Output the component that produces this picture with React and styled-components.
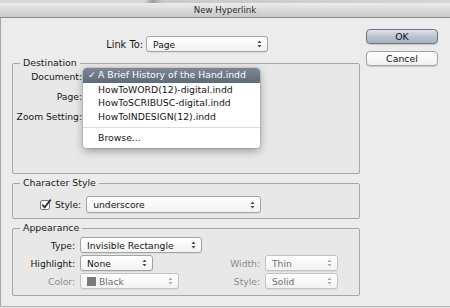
import React from "react";
import styled, { createGlobalStyle } from "styled-components";

const GlobalStyle = createGlobalStyle`
  html, body { margin: 0; padding: 0; }
  body {
    width: 450px; height: 308px; overflow: hidden;
    background: #ececec;
    font-family: "DejaVu Sans", "Liberation Sans", sans-serif;
    font-size: 9.2px;
    color: #161616;
  }
  * { box-sizing: border-box; }
`;

const Window = styled.div`
  width: 450px;
  height: 308px;
  display: flex;
  flex-direction: column;
  background: #ececec;
`;

const TopStrip = styled.div`
  height: 3px;
  background: linear-gradient(90deg, #d8d8d8 0%, #d8d8d8 32%, #9c9c9c 34%, #c9c9c9 36%, #d4d4d4 100%);
`;

const TitleBar = styled.div`
  height: 15px;
  background: linear-gradient(#ececec, #c8c8c8);
  border-bottom: 1px solid #8d8d8d;
  text-align: center;
  font-size: 8.6px;
  line-height: 14px;
  color: #2b2b2b;
`;

const Body = styled.div`
  flex: 1;
  display: grid;
  grid-template-columns: 348px 72px;
  column-gap: 6px;
  padding-left: 11px;
  border-left: 1px solid #a6a6a6;
  align-items: start;
`;

const Footer = styled.div`
  height: 2px;
  border-top: 1px solid #b4b4b4;
  background: #e2e2e2;
`;

const Main = styled.div`
  padding-top: 18px;
  display: flex;
  flex-direction: column;
`;

const Side = styled.div`
  padding-top: 11px;
  display: flex;
  flex-direction: column;
  gap: 7px;
`;

const Button = styled.div`
  height: 15px;
  border-radius: 4px;
  text-align: center;
  line-height: 13px;
  font-size: 9.4px;
  color: #111;
  border: 1px solid ${(p) => (p.$default ? "#6d7583" : "#a2a2a2")};
  background: ${(p) =>
    p.$default
      ? "linear-gradient(#dde2ea, #b9c1cd 55%, #aab3c1)"
      : "linear-gradient(#ffffff, #f1f1f1)"};
  box-shadow: 0 1px 1px rgba(0, 0, 0, 0.15);
`;

const LinkRow = styled.div`
  display: flex;
  align-items: center;
  height: 16px;
`;

const LinkLabel = styled.span`
  width: 131px;
  text-align: right;
  margin-right: 3px;
  font-size: 9.8px;
`;

const SelectBox = styled.div`
  position: relative;
  width: ${(p) => p.$w}px;
  height: ${(p) => p.$h || 16}px;
  border: 1px solid ${(p) => (p.$disabled ? "#c3c3c3" : "#a3a3a3")};
  border-radius: 3px;
  background: linear-gradient(#ffffff, #f2f2f2);
  box-shadow: 0 1px 0 rgba(0, 0, 0, 0.06);
  display: flex;
  align-items: center;
  padding-left: 6px;
  color: ${(p) => (p.$disabled ? "#6f6f6f" : "#141414")};
  justify-self: start;
`;

const Swatch = styled.span`
  width: 9px;
  height: 9px;
  background: #7a7a7a;
  margin-right: 3px;
`;

const ArrowIcon = styled.svg`
  position: absolute;
  right: 5px;
  top: 50%;
  margin-top: -4px;
`;

function Arrows({ disabled }) {
  const c = disabled ? "#a8a8a8" : "#4a4a4a";
  return (
    <ArrowIcon width="5" height="8" viewBox="0 0 5 8">
      <path d="M2.5 0.5 L4.5 3 L0.5 3 Z" fill={c} />
      <path d="M2.5 7.5 L4.5 5 L0.5 5 Z" fill={c} />
    </ArrowIcon>
  );
}

function Select({ w, h, disabled, swatch, children }) {
  return (
    <SelectBox $w={w} $h={h} $disabled={disabled}>
      {swatch && <Swatch />}
      {children}
      <Arrows disabled={disabled} />
    </SelectBox>
  );
}

const Group = styled.fieldset`
  position: relative;
  margin: ${(p) => p.$mt}px 0 0 0;
  padding: 0;
  height: ${(p) => p.$h}px;
  border: 1px solid #a7a7a7;
  border-radius: 2px;
  background: rgba(0, 0, 0, 0.015);
  min-width: 0;
`;

const Legend = styled.legend`
  margin-left: 7px;
  padding: 0 3px;
  line-height: 12px;
  font-size: 9.4px;
  color: #1a1a1a;
`;

const DestGrid = styled.div`
  display: grid;
  grid-template-columns: 69px 1fr;
  grid-auto-rows: 14px;
  column-gap: 3px;
  row-gap: 6px;
  align-items: center;
`;

const Label = styled.span`
  text-align: right;
  white-space: nowrap;
  color: ${(p) => (p.$disabled ? "#8b8b8b" : "#161616")};
`;

const Anchor = styled.div`
  position: relative;
  height: 14px;
`;

const Menu = styled.div`
  position: absolute;
  left: -2px;
  top: -1px;
  width: 177px;
  padding-bottom: 3px;
  background: rgba(255, 255, 255, 0.98);
  border-radius: 4px;
  box-shadow: 0 3px 9px rgba(0, 0, 0, 0.35), 0 0 0 1px rgba(0, 0, 0, 0.08);
  z-index: 10;
  overflow: hidden;
`;

const MenuItem = styled.div`
  position: relative;
  height: ${(p) => (p.$selected ? 14.5 : 13.5)}px;
  line-height: ${(p) => (p.$selected ? 14.5 : 13.5)}px;
  padding-left: 15px;
  font-size: 9.3px;
  white-space: nowrap;
  color: ${(p) => (p.$selected ? "#ffffff" : "#161616")};
  background: ${(p) =>
    p.$selected ? "linear-gradient(#7c8797, #5e6979)" : "transparent"};
`;

const Check = styled.span`
  position: absolute;
  left: 5px;
  top: 0;
`;

const Separator = styled.div`
  height: 1px;
  margin: 3.5px 0;
  background: #dcdcdc;
`;

const StyleRow = styled.div`
  display: flex;
  align-items: center;
  height: 17px;
  margin-top: 7px;
  padding-left: 27px;
`;

const CheckBox = styled.svg`
  margin-right: 3px;
`;

const StyleLabel = styled.span`
  margin-right: 5px;
`;

const AppGrid = styled.div`
  display: grid;
  grid-template-columns: 62px 125px 50px 73px;
  grid-auto-rows: 16px;
  column-gap: 5px;
  row-gap: 2px;
  margin-top: 3px;
  align-items: center;
`;

export default function App() {
  return (
    <>
      <GlobalStyle />
      <Window>
        <TopStrip />
        <TitleBar>New Hyperlink</TitleBar>
        <Body>
          <Main>
            <LinkRow>
              <LinkLabel>Link To:</LinkLabel>
              <Select w={122}>Page</Select>
            </LinkRow>

            <Group $mt={5} $h={117}>
              <Legend>Destination</Legend>
              <DestGrid>
                <Label>Document:</Label>
                <Anchor>
                  <Select w={160} h={14} />
                  <Menu>
                    <MenuItem $selected>
                      <Check>✓</Check>A Brief History of the Hand.indd
                    </MenuItem>
                    <MenuItem>HowToWORD(12)-digital.indd</MenuItem>
                    <MenuItem>HowToSCRIBUSC-digital.indd</MenuItem>
                    <MenuItem>HowToINDESIGN(12).indd</MenuItem>
                    <Separator />
                    <MenuItem>Browse...</MenuItem>
                  </Menu>
                </Anchor>
                <Label>Page:</Label>
                <Select w={60} h={14} />
                <Label>Zoom Setting:</Label>
                <Select w={120} h={14} />
              </DestGrid>
            </Group>

            <Group $mt={3} $h={42}>
              <Legend>Character Style</Legend>
              <StyleRow>
                <CheckBox width="12" height="11" viewBox="0 0 12 11">
                  <rect x="0.5" y="1.5" width="9" height="9" rx="1.5" fill="#fdfdfd" stroke="#7d7d7d" />
                  <path d="M2.3 5.6 L4.6 8.4 L10.8 0.6" fill="none" stroke="#2a2f38" strokeWidth="1.7" />
                </CheckBox>
                <StyleLabel>Style:</StyleLabel>
                <Select w={175} h={17}>underscore</Select>
              </StyleRow>
            </Group>

            <Group $mt={3} $h={74}>
              <Legend>Appearance</Legend>
              <AppGrid>
                <Label>Type:</Label>
                <Select w={122}>Invisible Rectangle</Select>
                <span />
                <span />
                <Label>Highlight:</Label>
                <Select w={73}>None</Select>
                <Label $disabled>Width:</Label>
                <Select w={73} disabled>Thin</Select>
                <Label $disabled>Color:</Label>
                <Select w={99} disabled swatch>Black</Select>
                <Label $disabled>Style:</Label>
                <Select w={73} disabled>Solid</Select>
              </AppGrid>
            </Group>
          </Main>

          <Side>
            <Button $default>OK</Button>
            <Button>Cancel</Button>
          </Side>
        </Body>
        <Footer />
      </Window>
    </>
  );
}
